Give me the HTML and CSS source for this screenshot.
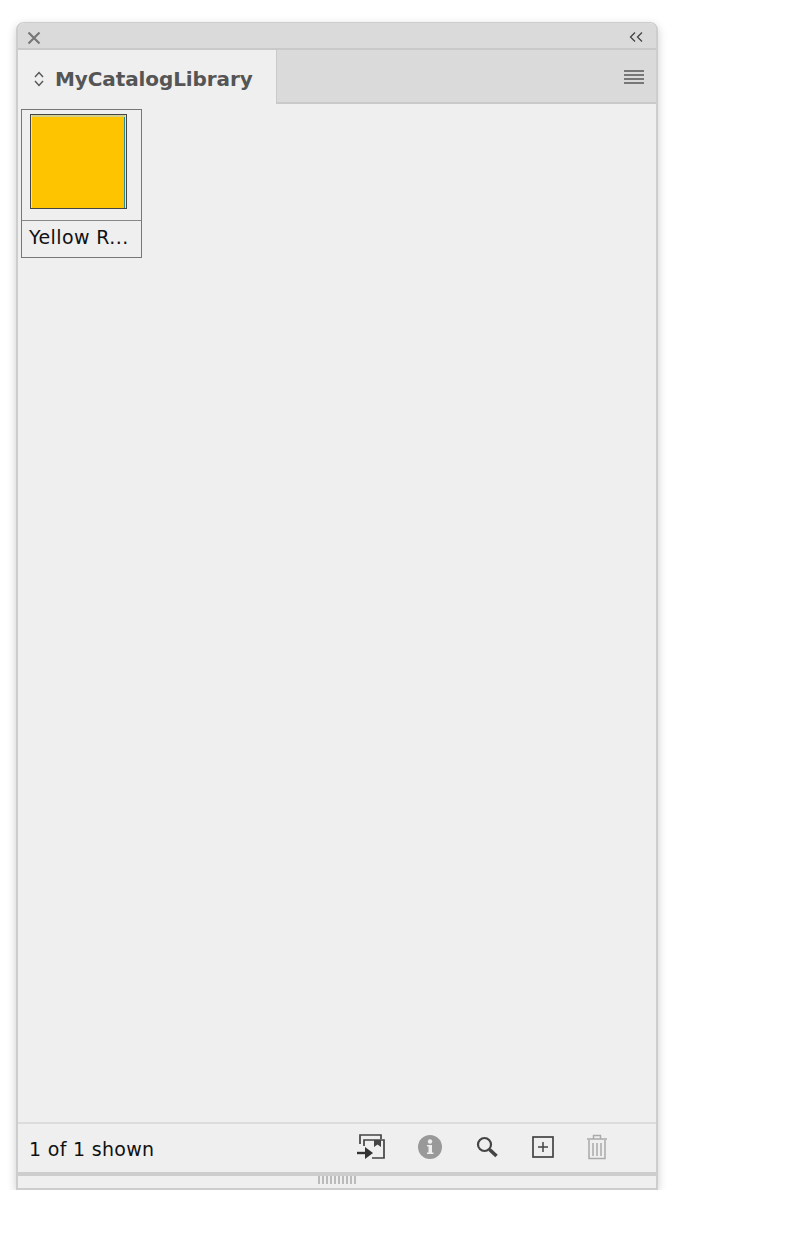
FILE: index.html
```html
<!DOCTYPE html>
<html lang="en">
<head>
  <meta charset="UTF-8" />
  <title>MyCatalogLibrary</title>
  <link rel="stylesheet" href="styles.css">
</head>
<body>

<div class="panel">
  <div class="title-bar">
    <svg class="icon-close" width="14" height="14" viewBox="0 0 14 14"><path d="M1.5 1.5 L12.5 12.5 M12.5 1.5 L1.5 12.5" stroke="#777" stroke-width="2.2" fill="none"/></svg>
    <svg class="icon-collapse" width="14" height="10" viewBox="0 0 14 10"><path d="M6 .5 L1.5 5 L6 9.5 M13 .5 L8.500 5 L13 9.500" stroke="#444" stroke-width="1.3" fill="none"/></svg>
  </div>

  <div class="tab-bar">
    <div class="tab">
      <svg class="icon-updown" width="12" height="16" viewBox="0 0 12 16"><path d="M2 6 L6 1.500 L10 6 M2 10 L6 14.500 L10 10" stroke="#555" stroke-width="1.400" fill="none"/></svg>
      <span class="tab-name">MyCatalogLibrary</span>
    </div>
    <div class="tab-rest">
      <div class="menu-lines"><i></i><i></i><i></i><i></i></div>
    </div>
  </div>

  <div class="content">
    <div class="item">
      <div class="thumb-box">
        <div class="thumb"></div>
      </div>
      <div class="item-name">Yellow R...</div>
    </div>
  </div>

  <div class="footer">
    <span class="count">1 of 1 shown</span>
    <div class="tools">
      <svg width="28" height="28" viewBox="0 0 28 28"><path d="M3 11 V2 H24 V6" stroke="#444" stroke-width="1.700" fill="none"/><path d="M7 13 V7 H27 V25 H15" stroke="#444" stroke-width="1.700" fill="none"/><path d="M17 7 H24 V14 L20.500 11.500 L17 14 Z" fill="#444"/><path d="M0 20 H9" stroke="#333" stroke-width="2.400" fill="none"/><path d="M8 14 L16 20 L8 26 Z" fill="#333"/></svg>
      <svg width="26" height="26" viewBox="0 0 26 26"><circle cx="13" cy="13" r="12" fill="#999"/><circle cx="13" cy="7.500" r="2.200" fill="#eee"/><path d="M10 11 H15 V18.500 H16.500 V20 H10 V18.500 H11.500 V12.500 H10 Z" fill="#eee"/></svg>
      <svg width="24" height="24" viewBox="0 0 24 24"><circle cx="9.500" cy="9.500" r="6.500" stroke="#444" stroke-width="2.200" fill="none"/><path d="M14.500 14.500 L21.500 21" stroke="#444" stroke-width="3.600" fill="none"/></svg>
      <svg class="tool-add" width="22" height="22" viewBox="0 0 22 22"><rect x="1" y="1" width="20" height="20" stroke="#444" stroke-width="1.700" fill="none"/><path d="M11 6 V16 M6 11 H16" stroke="#444" stroke-width="1.500" fill="none"/></svg>
      <svg width="22" height="26" viewBox="0 0 22 26"><path d="M1 5 H21 M7.500 4.500 V1.500 H14.500 V4.500" stroke="#aaa" stroke-width="1.500" fill="none"/><path d="M3 6 V24.500 H19 V6" stroke="#aaa" stroke-width="1.500" fill="none"/><path d="M7 9 V22 M11 9 V22 M15 9 V22" stroke="#aaa" stroke-width="1.500" fill="none"/></svg>
    </div>
  </div>

  <div class="grip-bar">
    <div class="grip"></div>
  </div>
</div>

</body>
</html>
```
FILE: styles.css
```css
body {
  margin: 0;
  background-color: #fff;
  font-family: "DejaVu Sans", sans-serif;
}

.panel {
  width: 638px;
  height: 1165px;
  margin: 22px 0 0 16px;
  display: flex;
  flex-direction: column;
  background-color: #efefef;
  border: 2px solid #cdcdcd;
  border-top-width: 1px;
  border-radius: 8px 8px 0 0;
  box-shadow: 0 3px 10px rgba(0,0,0,0.2);
}

.title-bar {
  height: 25px;
  flex: none;
  display: flex;
  align-items: center;
  justify-content: space-between;
  padding: 0 13px 0 9px;
  background-color: #dadada;
  border-bottom: 2px solid #c9c9c9;
  border-radius: 7px 7px 0 0;
}

.icon-close {
  margin-top: 4px;
}

.icon-collapse {
  margin-top: 2px;
}

.tab-bar {
  height: 54px;
  flex: none;
  display: flex;
}

.tab {
  width: 259px;
  display: flex;
  align-items: center;
  gap: 10px;
  padding: 4px 0 0 15px;
  box-sizing: border-box;
  border-right: 1px solid #c9c9c9;
}

.tab-name {
  font-size: 20px;
  font-weight: 700;
  letter-spacing: -0.1px;
  color: #555;
}

.tab-rest {
  flex: 1;
  display: flex;
  align-items: center;
  justify-content: flex-end;
  padding: 4px 12px 0 0;
  background-color: #dadada;
  border-bottom: 2px solid #c9c9c9;
}

.menu-lines i {
  display: block;
  width: 20px;
  height: 2px;
  margin-bottom: 2px;
  background-color: #777;
}

.content {
  flex: 1;
  padding: 5px 3px;
}

.item {
  width: 119px;
  height: 147px;
  border: 1px solid #777;
}

.thumb-box {
  height: 111px;
  padding: 4px 0 0 8px;
  box-sizing: border-box;
  border-bottom: 1px solid #888;
}

.thumb {
  width: 95px;
  height: 93px;
  background-color: #ffc400;
  border: 1px solid #444;
  box-shadow: inset 1px 0 0 #dfe3d0, inset -1px 0 0 #c4f0f0, inset 0 2px 0 #d2d08a, inset -2px 0 0 #2f8a8a;
}

.item-name {
  padding: 5px 0 0 7px;
  font-size: 19px;
  letter-spacing: 0.4px;
  color: #111;
}

.footer {
  height: 48px;
  flex: none;
  display: flex;
  align-items: center;
  justify-content: space-between;
  padding: 0 48px 0 11px;
  border-top: 2px solid #dcdcdc;
  border-bottom: 4px solid #cdcdcd;
}

.count {
  margin-top: 2px;
  font-size: 19px;
  letter-spacing: 0.3px;
  color: #111;
}

.tools {
  display: flex;
  align-items: center;
  gap: 32px;
  margin-bottom: 2px;
}

.tool-add {
  margin-left: 1px;
}

.grip-bar {
  height: 12px;
  flex: none;
  display: flex;
  justify-content: center;
  align-items: flex-start;
}

.grip {
  width: 38px;
  height: 8px;
  background: repeating-linear-gradient(90deg, #bbb 0, #bbb 2px, transparent 2px, transparent 4px);
}
```
